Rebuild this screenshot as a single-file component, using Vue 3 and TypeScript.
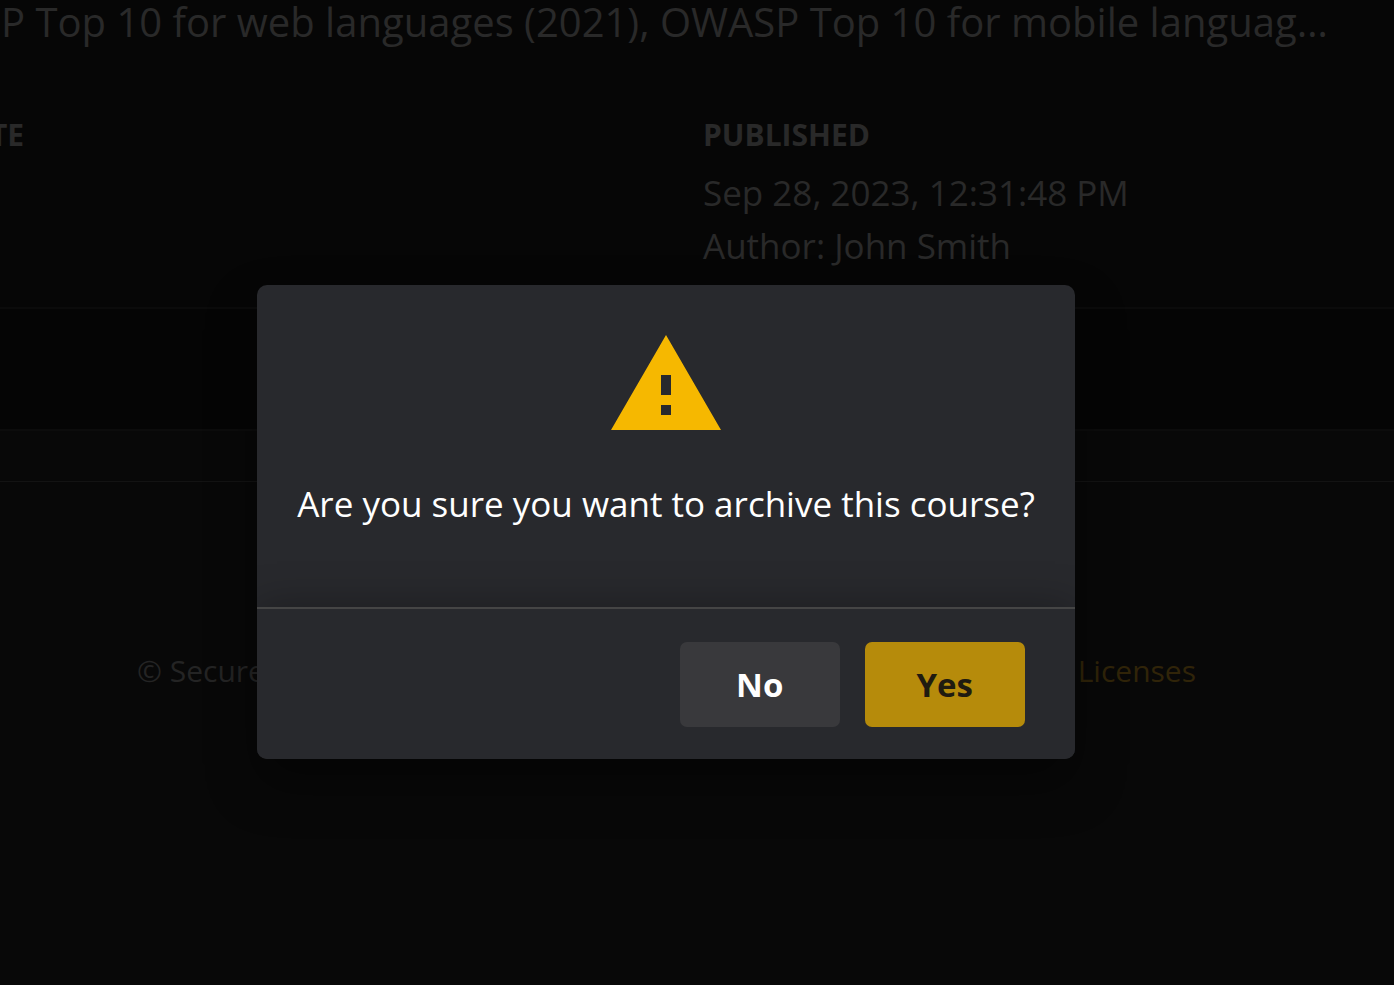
<script setup lang="ts">
import { ref } from 'vue'

interface Detail {
  heading: string
  lines: string[]
}

const summary = 'P Top 10 for web languages (2021), OWASP Top 10 for mobile languag…'
const details: Detail[] = [
  { heading: 'TE', lines: [] },
  { heading: 'PUBLISHED', lines: ['Sep 28, 2023, 12:31:48 PM', 'Author: John Smith'] },
]
const open = ref(true)
</script>

<template>
  <div class="page">
    <main class="course">
      <p class="summary">{{ summary }}</p>
      <div class="details">
        <section v-for="detail in details" :key="detail.heading" class="detail">
          <h2>{{ detail.heading }}</h2>
          <p v-for="line in detail.lines" :key="line">{{ line }}</p>
        </section>
      </div>
    </main>
    <div class="band"></div>
    <div class="strip"></div>
    <footer class="footer">
      <span>© Secure</span>
      <a href="#licenses">Licenses</a>
    </footer>

    <div v-if="open" class="overlay">
      <div class="dialog" role="alertdialog" aria-modal="true" aria-labelledby="question">
        <div class="body">
          <svg class="warning" viewBox="0 0 22 19" aria-hidden="true">
            <path fill="#f6b800" fill-rule="evenodd" d="M0 19h22L11 0 0 19zm12-3h-2v-2h2v2zm0-4h-2V8h2v4z" />
          </svg>
          <p id="question">Are you sure you want to archive this course?</p>
        </div>
        <div class="actions">
          <button type="button" class="no" @click="open = false">No</button>
          <button type="button" class="yes" @click="open = false">Yes</button>
        </div>
      </div>
    </div>
  </div>
</template>

<style>
body {
  margin: 0;
  background: #080808;
}
</style>

<style scoped>
.page {
  position: relative;
  display: flex;
  flex-direction: column;
  min-height: 100vh;
  overflow: hidden;
  background: #080808;
  color: #292929;
  font-family: "Open Sans", "Noto Sans", sans-serif;
  font-size: 35px;
  line-height: 53px;
}

p,
h2 {
  margin: 0;
}

.course {
  min-height: 307px;
  background: #060606;
}

.summary {
  padding-left: 1px;
  font-size: 40px;
  line-height: 44px;
  white-space: nowrap;
}

.details {
  display: grid;
  grid-template-columns: 1fr 1fr;
  column-gap: 12px;
  padding-top: 68px;
}

.detail h2 {
  padding-bottom: 8px;
  font-size: 30px;
  font-weight: 700;
  line-height: 46px;
}

.detail:first-child h2 {
  margin-left: -10px;
}

.band {
  height: 120px;
  border-top: 2px solid #0b0b0b;
  border-bottom: 2px solid #0c0c0c;
  background: #050505;
}

.strip {
  height: 50px;
  border-bottom: 1px solid #131313;
}

.footer {
  display: flex;
  justify-content: space-between;
  padding: 166px 198px 0 137px;
  color: #242424;
  font-size: 30px;
  line-height: 46px;
}

.footer a {
  color: #302409;
  text-decoration: none;
}

.overlay {
  position: absolute;
  inset: 0;
  display: flex;
  align-items: center;
  justify-content: center;
  padding: 59px 62px 0 0;
}

.dialog {
  overflow: hidden;
  border-radius: 10px;
  background: #28292d;
  box-shadow: 0 25px 50px rgba(0, 0, 0, 0.4);
}

.body {
  display: flex;
  flex-direction: column;
  align-items: center;
  padding: 50px 40px 77px;
  color: #fff;
}

.warning {
  display: block;
  width: 110px;
  height: 95px;
  margin-bottom: 47px;
}

.actions {
  display: flex;
  justify-content: flex-end;
  gap: 25px;
  padding: 33px 50px 32px;
  border-top: 2px solid #454545;
  background: #28292d;
  box-shadow: 0 0 40px rgba(0, 0, 0, 0.3);
}

button {
  width: 160px;
  height: 85px;
  padding: 0;
  border: 0;
  border-radius: 7px;
  font: 700 33px "Open Sans", "Noto Sans", sans-serif;
  cursor: pointer;
}

.no {
  background: #39393c;
  color: #fff;
}

.yes {
  background: #b68b0b;
  color: #1f1b10;
}
</style>
